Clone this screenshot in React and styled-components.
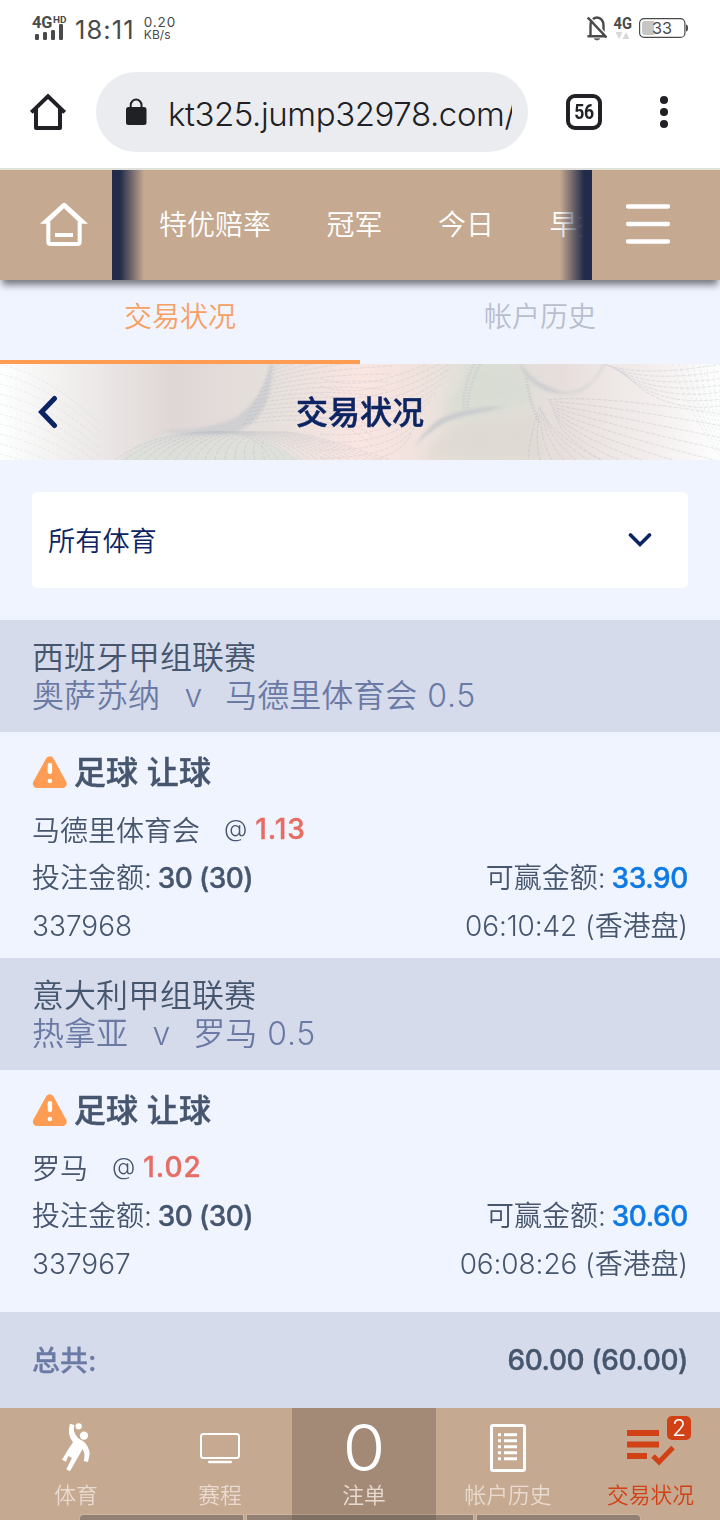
import React from "react";
import styled, { createGlobalStyle } from "styled-components";

const GlobalStyle = createGlobalStyle`
	* {
		box-sizing: border-box;
	}
	body {
		margin: 0;
		background: #f0f4ff;
		font-family: Inter, "Noto Sans CJK SC", sans-serif;
		font-weight: 350;
	}
	svg {
		display: block;
		flex: none;
	}
`;

const Page = styled.div`
	width: 720px;
	height: 1520px;
	display: flex;
	flex-direction: column;
	overflow: hidden;
	background: #f0f4ff;
	color: #46566e;
`;

/* phone status bar */
const StatusBar = styled.div`
	height: 56px;
	padding: 0 32px 0 31px;
	display: flex;
	align-items: center;
	justify-content: space-between;
	background: #fff;
	color: #4a4a4a;
`;

const StatusGroup = styled.div`
	display: flex;
	align-items: center;
	gap: ${(p) => p.$gap}px;
`;

const IconShift = styled.div`
	margin-top: -4px;
`;

const Clock = styled.span`
	font-family: Inter, sans-serif;
	font-size: 25.5px;
	font-weight: 400;
	letter-spacing: 1.1px;
	margin-top: 2px;
`;

const Speed = styled.div`
	display: flex;
	flex-direction: column;
	font-size: 13.5px;
	font-weight: 400;
	line-height: 13px;
	letter-spacing: 0.9px;
	margin-top: 1px;
	margin-left: 1px;
	small {
		font-size: 12px;
		line-height: 12px;
		letter-spacing: 0.1px;
	}
`;

/* browser bar */
const BrowserBar = styled.div`
	height: 114px;
	padding: 16px 28px 0;
	display: flex;
	align-items: flex-start;
	background: #fff;
	border-bottom: 2px solid #e1e1dc;
`;

const BarIcon = styled.div`
	width: ${(p) => p.$w}px;
	height: 80px;
	display: flex;
	align-items: center;
	margin-left: ${(p) => p.$ml || 0}px;
`;

const Address = styled.div`
	width: 432px;
	height: 80px;
	padding: 0 16px 0 30px;
	margin-left: 28px;
	border-radius: 40px;
	background: #ebecf0;
	display: flex;
	align-items: center;
	gap: 21px;
`;

const Url = styled.span`
	width: 344px;
	overflow: hidden;
	white-space: nowrap;
	font-size: 33px;
	letter-spacing: -0.42px;
	line-height: 44px;
	padding-top: 4px;
	color: #202124;
`;

const TabCount = styled.div`
	width: 36px;
	height: 36px;
	border: 4px solid #202124;
	border-radius: 9px;
	display: flex;
	align-items: center;
	justify-content: center;
	font: 700 20px "Roboto", sans-serif;
	letter-spacing: -0.5px;
	color: #202124;
	span {
		transform: scaleX(0.88);
	}
`;

/* site header */
const Header = styled.header`
	height: 110px;
	flex: none;
	display: flex;
	background: #c5a991;
	box-shadow: 0 7px 7px -2px rgba(0, 0, 0, 0.5);
	position: relative;
	z-index: 1;
`;

const HeaderButton = styled.div`
	width: ${(p) => p.$w}px;
	display: flex;
	align-items: center;
	padding-left: ${(p) => p.$pl}px;
	padding-bottom: 3px;
`;

const Menu = styled.nav`
	width: 480px;
	padding-left: 47px;
	display: flex;
	align-items: center;
	gap: 55.5px;
	overflow: hidden;
	position: relative;
	color: #fff;
	font-size: 28px;
	white-space: nowrap;
`;

const MenuItem = styled.span`
	flex: none;
	margin-top: -5px;
`;

const Fade = styled.i`
	position: absolute;
	top: 0;
	bottom: 0;
	width: 32px;
	${(p) => (p.$side === "left" ? "left: 0" : "right: 0")};
	background: linear-gradient(
		to ${(p) => (p.$side === "left" ? "right" : "left")},
		#222b49 8px,
		rgba(34, 43, 73, 0)
	);
`;

const Tabs = styled.div`
	height: 84px;
	flex: none;
	display: flex;
`;

const Tab = styled.div`
	flex: 1;
	text-align: center;
	font-size: 28px;
	line-height: 74px;
	height: 84px;
	color: ${(p) => (p.$active ? "#f7a062" : "#b9becd")};
	border-bottom: 4px solid ${(p) => (p.$active ? "#ff9c54" : "transparent")};
`;

const Banner = styled.div`
	height: 96px;
	flex: none;
	display: grid;
	> * {
		grid-area: 1 / 1;
	}
`;

const BannerRow = styled.div`
	display: grid;
	grid-template-columns: 96px 1fr 96px;
	align-items: center;
	z-index: 1;
	h1 {
		margin: 0;
		padding-bottom: 4px;
		text-align: center;
		font-size: 32px;
		font-weight: 500;
		-webkit-text-stroke: 0.5px #0d2463;
		color: #0d2463;
	}
	svg {
		margin-left: 36px;
	}
`;

const Filter = styled.div`
	height: 160px;
	flex: none;
	padding: 32px;
`;

const Select = styled.div`
	height: 96px;
	padding: 0 36px 0 16px;
	border-radius: 5px;
	background: #fff;
	display: flex;
	align-items: center;
	justify-content: space-between;
	font-size: 27.2px;
	color: #0d2463;
	span {
		padding-bottom: 3px;
	}
`;

const League = styled.div`
	height: 112px;
	flex: none;
	padding: 19px 32px 17px;
	background: #d5dbea;
	font-size: 32px;
	line-height: 38px;
`;

const Match = styled.div`
	display: flex;
	color: #6a7aa5;
	white-space: pre;
	em {
		font-style: normal;
		padding: 0 23px 0 24.5px;
	}
`;

const Bet = styled.div`
	height: ${(p) => p.$h}px;
	flex: none;
	padding: 16px 32px 0;
`;

const BetTitle = styled.div`
	height: 48px;
	margin-bottom: 9px;
	display: flex;
	align-items: center;
	gap: 7px;
	font-size: 32px;
	font-weight: 500;
	-webkit-text-stroke: 0.5px #46566e;
	span {
		padding-bottom: 4px;
		letter-spacing: 0.1px;
	}
`;

const Line = styled.div`
	height: 48.5px;
	padding-bottom: ${(p) => (p.$odds ? 1 : 4)}px;
	display: flex;
	align-items: center;
	justify-content: ${(p) => (p.$odds ? "flex-start" : "space-between")};
	font-size: 28px;
	white-space: pre;
	em {
		font-style: normal;
		font-size: 24px;
		padding: 0 8px 0 24px;
	}
`;

const Num = styled.span`
	letter-spacing: ${(p) => p.$ls || 0}px;
	padding-top: ${(p) => p.$pt || 0}px;
`;

const Strong = styled.b`
	font-weight: 500;
	letter-spacing: ${(p) => p.$ls || -0.4}px;
	margin-left: ${(p) => p.$ml || 0}px;
	-webkit-text-stroke: 0.4px ${(p) => p.$c || "#46566e"};
	color: ${(p) => p.$c || "#46566e"};
`;

const Total = styled.div`
	height: 96px;
	flex: none;
	padding: 0 32px;
	background: #d5dbea;
	display: flex;
	align-items: center;
	justify-content: space-between;
	font-size: 28px;
	font-weight: 500;
	span {
		padding-bottom: 3px;
		color: #6a7aa5;
		-webkit-text-stroke: 0.3px #6a7aa5;
	}
`;

/* bottom navigation */
const Footer = styled.footer`
	height: 112px;
	flex: none;
	padding-left: 4px;
	display: flex;
	background: #c5a991;
	position: relative;
`;

const FootItem = styled.div`
	width: 144px;
	flex: none;
	display: flex;
	flex-direction: column;
	align-items: center;
	position: relative;
	background: ${(p) => (p.$dark ? "#a38a77" : "transparent")};
	color: ${(p) => (p.$hot ? "#d24115" : "#e9dad0")};
	font-size: 21.8px;
	${(p) => p.$hot && "padding-right: 3px;"}
`;

const FootIcon = styled.div`
	height: 72px;
	padding-top: 8px;
	display: flex;
	align-items: center;
`;

const FootLabel = styled.span`
	line-height: 30px;
`;

const BigCount = styled.span`
	font-size: 65px;
	line-height: 64px;
	font-weight: 300;
	color: #fff;
	transform: scaleX(1.07);
`;

const Badge = styled.span`
	position: absolute;
	top: 8px;
	left: 87px;
	width: 24px;
	height: 24px;
	border-radius: 5px;
	background: #d24115;
	color: #fff;
	font-size: 23px;
	line-height: 25px;
	text-align: center;
`;

const GestureBar = styled.div`
	position: absolute;
	left: 80px;
	bottom: 0;
	width: 560px;
	height: 5px;
	display: grid;
	grid-template-columns: 163px 226px 163px;
	gap: 4px;
	i {
		background: rgba(70, 70, 70, 0.4);
		box-shadow: 0 0 0 1px rgba(255, 255, 255, 0.15);
	}
	i:first-child {
		border-top-left-radius: 4px;
	}
	i:last-child {
		border-top-right-radius: 4px;
	}
`;

const SignalIcon = () => (
	<svg width="36" height="30" viewBox="-1 -4 36 30" fill="#4a4a4a">
		<text x="0" y="12.500" fontFamily="Roboto" fontWeight="700" fontSize="16.500" textLength="20.500" lengthAdjust="spacingAndGlyphs">4G</text>
		<text x="21" y="8" fontFamily="Roboto" fontWeight="700" fontSize="9.500" textLength="13.500" lengthAdjust="spacingAndGlyphs">HD</text>
		<rect x="3" y="19" width="4" height="6" rx="1.200" />
		<rect x="11" y="17" width="4" height="8" rx="1.200" />
		<rect x="19" y="15" width="4" height="10" rx="1.200" />
		<rect x="27" y="9" width="4" height="16" rx="1.200" />
	</svg>
);

const BellOffIcon = () => (
	<svg width="20" height="25" viewBox="0 0 20 25" fill="none" stroke="#4a4a4a" strokeWidth="2.400">
		<path d="M3.500 20V9.500C3.500 4.500 6.500 1.500 10 1.500s6.500 3 6.500 8V20M0.500 20.300h19" />
		<path d="M7 22.700h6l-3 1.500z" fill="#4a4a4a" strokeWidth="0.500" />
		<path d="M2.500 0.500L20.500 20" stroke="#fff" strokeWidth="1.500" />
		<path d="M0.800 1.500L19.500 21.500" />
	</svg>
);

const DataIcon = () => (
	<svg width="20" height="28" viewBox="0 -4 20 28">
		<text x="0.500" y="12.500" fontFamily="Roboto" fontWeight="700" fontSize="16" fill="#4a4a4a" textLength="18.500" lengthAdjust="spacingAndGlyphs">4G</text>
		<path d="M2.500 16h7l-3.500 7zM9.500 23h7L13 16z" fill="#d8d8d8" />
	</svg>
);

const BatteryIcon = () => (
	<svg width="49" height="20" viewBox="0 0 49 20">
		<rect x="0.600" y="0.600" width="45.300" height="18.800" rx="4.500" fill="#fff" stroke="#4a4a4a" strokeWidth="1.200" />
		<path d="M6 3h9v14H6a3 3 0 0 1-3-3V6a3 3 0 0 1 3-3z" fill="#c6c6c4" />
		<path d="M47 6.500q2 0 2 3.500t-2 3.500z" fill="#4a4a4a" />
		<text x="13" y="15.700" fontFamily="Inter" fontWeight="400" fontSize="16" fill="#4a4a4a" textLength="20" lengthAdjust="spacingAndGlyphs">33</text>
	</svg>
);

const ChromeHomeIcon = () => (
	<svg width="40" height="40" viewBox="84 276 120 120" fill="none" stroke="#202124" strokeWidth="12">
		<path d="M94 337L144 289l50 48" />
		<path d="M108 326v58h72v-58" strokeLinejoin="round" />
	</svg>
);

const LockIcon = () => (
	<svg width="21" height="28" viewBox="0 0 21 28">
		<rect x="0" y="9" width="20.500" height="18" rx="2.500" fill="#202124" />
		<path d="M4.700 10V7a5.400 5.400 0 0 1 10.800 0v3" fill="none" stroke="#202124" strokeWidth="2" />
	</svg>
);

const DotsIcon = () => (
	<svg width="8" height="32" viewBox="0 0 8 32" fill="#202124">
		<circle cx="4" cy="4" r="4" />
		<circle cx="4" cy="16" r="4" />
		<circle cx="4" cy="28" r="4" />
	</svg>
);

const HomeIcon = () => (
	<svg width="48" height="44" viewBox="120 108 144 132" fill="none" stroke="#fff">
		<path d="M120 173L188 112q5-4 9 0l67 61h-23L192 127l-49 46z" fill="#fff" stroke="none" />
		<path d="M145 168v60q0 6 6 6h82q6 0 6-6v-60" strokeWidth="12" />
		<path d="M165 207h54" strokeWidth="12" />
	</svg>
);

const BurgerIcon = () => (
	<svg width="44" height="40" viewBox="0 0 44 40" stroke="#fff" strokeWidth="4.300" strokeLinecap="round">
		<path d="M2 2.500h40M2 20h40M2 37.500h40" />
	</svg>
);

const WarnIcon = () => (
	<svg width="35" height="32" viewBox="0 0 35 32">
		<path d="M17.800 4.500L30.500 27.800H5z" fill="#ff9c54" stroke="#ff9c54" strokeWidth="8.400" strokeLinejoin="round" />
		<rect x="15.700" y="7" width="4.400" height="11" rx="2" fill="#fff" />
		<circle cx="17.900" cy="25" r="2.300" fill="#fff" />
	</svg>
);

const SportIcon = () => (
	<svg width="33.300" height="53.300" viewBox="180 365 100 160" fill="#fff">
		<circle cx="239" cy="381" r="9.500" />
		<circle cx="255" cy="409" r="12.500" />
		<path d="M213 373L226 377Q220 400 238 417L255 427Q271 442 272 465L267 488 254 485Q260 465 251 449L213 516 202 510 219 476 208 470 201 487 189 481 206 453 222 429Q203 405 213 373z" />
	</svg>
);

const TvIcon = () => (
	<svg width="40" height="32" viewBox="0 0 40 32" fill="none" stroke="#fff">
		<rect x="1" y="2" width="38" height="24" rx="2.500" strokeWidth="2" />
		<path d="M9.200 30h21.600" strokeWidth="2.400" strokeLinecap="round" />
	</svg>
);

const ListIcon = () => (
	<svg width="36" height="48" viewBox="0 0 36 48" fill="none" stroke="#fff" strokeWidth="3">
		<rect x="1.500" y="1.500" width="33" height="45" rx="1.500" />
		<path d="M8 10.700h3M14 10.700h13M8 16.700h3M14 16.700h13M8 22.700h3M14 22.700h13M8 28.700h3M14 28.700h13M8 34.700h3M14 34.700h13" />
	</svg>
);

const CheckListIcon = () => (
	<svg width="48" height="36" viewBox="0 0 48 36" fill="none" stroke="#d24115" strokeWidth="6">
		<path d="M0 3h32M0 14.500h32M0 26h20" />
		<path d="M26 26l6 6 14-14.500" strokeWidth="5" />
	</svg>
);

// guilloche style lines of the banner, one curve per step
const fan = (n, draw) => Array.from({ length: n }, (_, i) => <path key={i} d={draw(i)} />);

const BannerArt = () => (
	<svg width="720" height="96" viewBox="0 0 720 96">
		<defs>
			<linearGradient id="wash">
				<stop offset="0" stopColor="#fdfefe" />
				<stop offset="0.100" stopColor="#f0eeed" />
				<stop offset="0.240" stopColor="#dfd7d6" />
				<stop offset="0.380" stopColor="#e6e0dc" />
				<stop offset="0.500" stopColor="#fae5e1" />
				<stop offset="0.590" stopColor="#efe2dd" />
				<stop offset="0.660" stopColor="#dddfd8" />
				<stop offset="0.780" stopColor="#e7dedc" />
				<stop offset="0.920" stopColor="#f4f0ef" />
				<stop offset="1" stopColor="#fefefe" />
			</linearGradient>
			<linearGradient id="low" x1="0" y1="0" x2="0" y2="1">
				<stop offset="0" stopColor="#dce0da" stopOpacity="0.300" />
				<stop offset="1" stopColor="#dce0da" stopOpacity="0.900" />
			</linearGradient>
			<filter id="soft" colorInterpolationFilters="sRGB">
				<feGaussianBlur stdDeviation="1.500" />
			</filter>
			<filter id="haze" x="-20%" y="-20%" width="140%" height="140%" colorInterpolationFilters="sRGB">
				<feGaussianBlur stdDeviation="6" />
			</filter>
		</defs>
		<rect width="720" height="96" fill="url(#wash)" />
		<path d="M120 96Q150 66 200 65T300 96z" fill="url(#low)" />
		<path d="M472 0L522 0 536 42 440 52z" fill="#d6dcd2" opacity="0.700" filter="url(#haze)" />
		<path d="M450 60L535 50 545 96H420z" fill="#dfd9d2" opacity="0.800" filter="url(#haze)" />
		<g filter="url(#soft)">
			<path d="M269 0H273C272 34 262 58 236 68Q210 74 160 67 215 66 238 52 266 30 269 0z" fill="#cbccd0" opacity="0.800" />
			<path d="M440 55Q460 44 506 42 490 47 460 53L446 58Q425 70 414 84 428 62 440 55z" fill="#c9cbce" />
			<path d="M520 0C532 34 586 44 604 0 590 30 570 34 550 24 535 18 526 8 520 0z" fill="#cccdcf" stroke="#cccdcf" />
		</g>
		<g fill="none" stroke="#c5c8cc" strokeWidth="3" opacity="0.500" strokeDasharray="1.500 1.500">
			<path d="M474 0Q462 26 464 46M480 0Q466 28 468 46M526 14Q530 40 540 60" />
		</g>
		<g fill="none" stroke="#8d9bb0" strokeWidth="1" opacity="0.180" strokeDasharray="4 1.500">
			{fan(15, (i) => `M${271 - i * 2} ${4 + i * 4}Q${300 + i * 3} ${i * 4 - 10} ${400 - i * 2} ${i * 8 - 30}`)}
			{fan(16, (i) => `M${115 + i * 10} 96Q${150 + i * 7} 70 ${205 + i * 5} 68T${270 + i * 8} 96`)}
			{fan(12, (i) => `M320 ${14 + i * 8}Q${370 + i * 3} ${34 + i * 6} ${466 - i * 5} ${i * 8 - 20}`)}
			{fan(9, (i) => `M${548 + i} ${36 + i * 2}Q${590 - i * 3} ${30 + i * 8} 722 ${50 + i * 12}`)}
			{fan(7, (i) => `M${604 + i * 3} ${i}Q${640 + i * 3} ${14 + i * 6} 722 ${i * 7}`)}
			{fan(7, (i) => `M${540 + i} ${42 + i * 2}Q${530 + i * 4} 70 ${528 + i * 12} 96`)}
		</g>
		<g fill="none" stroke="#a9cfc6" strokeWidth="1" opacity="0.250" strokeDasharray="3 2">
			{fan(8, (i) => `M${672 + i * 7} 0Q${690 + i * 4} 50 722 ${96 - i * 5}`)}
			{fan(12, (i) => `M0 ${i * 10}Q50 ${12 + i * 10} 100 ${60 + i * 8}`)}
		</g>
	</svg>
);

const bets = [
	{
		id: "337968",
		league: "西班牙甲组联赛",
		home: "奥萨苏纳",
		away: "马德里体育会",
		pick: "马德里体育会",
		odds: "1.13",
		win: "33.90",
		time: "06:10:42",
		h: 226,
	},
	{
		id: "337967",
		league: "意大利甲组联赛",
		home: "热拿亚",
		away: "罗马",
		pick: "罗马",
		odds: "1.02",
		win: "30.60",
		time: "06:08:26",
		h: 242,
	},
];

function BetCard({ bet }) {
	return (
		<>
			<League>
				<div>{bet.league}</div>
				<Match>
					<span>{bet.home}</span>
					<em>v</em>
					<span>{bet.away}</span>
					<Num $ls={0.8}> 0.5</Num>
				</Match>
			</League>
			<Bet $h={bet.h}>
				<BetTitle>
					<WarnIcon />
					<span>足球 让球</span>
				</BetTitle>
				<Line $odds>
					<span>{bet.pick}</span>
					<em>@</em>
					<Strong $c="#e66c64" $ls={0.9}>
						{bet.odds}
					</Strong>
				</Line>
				<Line>
					<span>
						投注金额: <Strong $ml={-2} $ls={-0.6}>30 (30)</Strong>
					</span>
					<span>
						可赢金额: <Strong $c="#0f7ae5" $ml={-2}>{bet.win}</Strong>
					</span>
				</Line>
				<Line>
					<Num $pt={3}>{bet.id}</Num>
					<Num $ls={-0.1}>{bet.time} (香港盘)</Num>
				</Line>
			</Bet>
		</>
	);
}

function App() {
	return (
		<Page>
			<GlobalStyle />
			<StatusBar>
				<StatusGroup $gap={8}>
					<IconShift>
						<SignalIcon />
					</IconShift>
					<Clock>18:11</Clock>
					<Speed>
						0.20
						<small>KB/s</small>
					</Speed>
				</StatusGroup>
				<StatusGroup $gap={6}>
					<BellOffIcon />
					<IconShift>
						<DataIcon />
					</IconShift>
					<BatteryIcon />
				</StatusGroup>
			</StatusBar>
			<BrowserBar>
				<BarIcon $w={40}>
					<ChromeHomeIcon />
				</BarIcon>
				<Address>
					<LockIcon />
					<Url>kt325.jump32978.com/</Url>
				</Address>
				<BarIcon $w={36} $ml={38}>
					<TabCount>
						<span>56</span>
					</TabCount>
				</BarIcon>
				<BarIcon $w={8} $ml={58}>
					<DotsIcon />
				</BarIcon>
			</BrowserBar>
			<Header>
				<HeaderButton $w={112} $pl={40}>
					<HomeIcon />
				</HeaderButton>
				<Menu>
					<MenuItem>特优赔率</MenuItem>
					<MenuItem>冠军</MenuItem>
					<MenuItem>今日</MenuItem>
					<MenuItem>早投</MenuItem>
					<Fade $side="left" />
					<Fade $side="right" />
				</Menu>
				<HeaderButton $w={128} $pl={34}>
					<BurgerIcon />
				</HeaderButton>
			</Header>
			<Tabs>
				<Tab $active>交易状况</Tab>
				<Tab>帐户历史</Tab>
			</Tabs>
			<Banner>
				<BannerArt />
				<BannerRow>
					<svg width="24" height="34" viewBox="0 0 24 34" fill="none" stroke="#0d2463" strokeWidth="5" strokeLinecap="round">
						<path d="M18.500 3.500L5.500 17l13 13.500" />
					</svg>
					<h1>交易状况</h1>
				</BannerRow>
			</Banner>
			<Filter>
				<Select>
					<span>所有体育</span>
					<svg width="24" height="16" viewBox="0 0 24 16" fill="none" stroke="#0d2463" strokeWidth="3.600" strokeLinecap="round">
						<path d="M2.500 3L12 12.500 21.500 3" />
					</svg>
				</Select>
			</Filter>
			{bets.map((bet) => (
				<BetCard key={bet.id} bet={bet} />
			))}
			<Total>
				<span>总共:</span>
				<Strong>60.00 (60.00)</Strong>
			</Total>
			<Footer>
				<FootItem>
					<FootIcon>
						<SportIcon />
					</FootIcon>
					<FootLabel>体育</FootLabel>
				</FootItem>
				<FootItem>
					<FootIcon>
						<TvIcon />
					</FootIcon>
					<FootLabel>赛程</FootLabel>
				</FootItem>
				<FootItem $dark>
					<FootIcon>
						<BigCount>0</BigCount>
					</FootIcon>
					<FootLabel>注单</FootLabel>
				</FootItem>
				<FootItem>
					<FootIcon>
						<ListIcon />
					</FootIcon>
					<FootLabel>帐户历史</FootLabel>
				</FootItem>
				<FootItem $hot>
					<FootIcon>
						<CheckListIcon />
					</FootIcon>
					<Badge>2</Badge>
					<FootLabel>交易状况</FootLabel>
				</FootItem>
				<GestureBar>
					<i />
					<i />
					<i />
				</GestureBar>
			</Footer>
		</Page>
	);
}

export default App;
